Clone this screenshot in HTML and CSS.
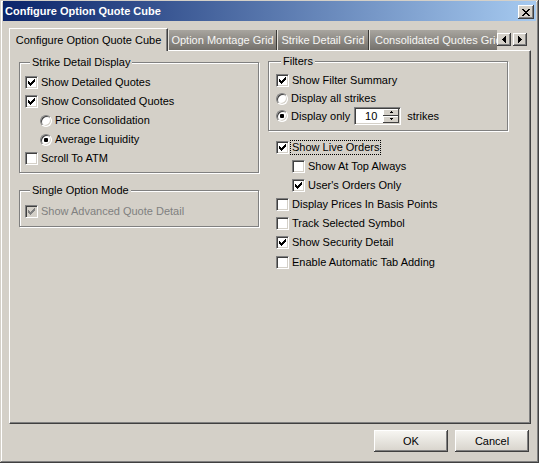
FILE: index.html
```html
<!DOCTYPE html>
<html>
<head>
<meta charset="utf-8">
<title>Configure Option Quote Cube</title>
<link rel="stylesheet" href="styles.css">
</head>
<body>
<div class="window">
  <div class="titlebar">
    <span class="title">Configure Option Quote Cube</span>
    <span class="close">
      <svg width="8" height="7" viewBox="0 0 8 7" shape-rendering="crispEdges"><path fill="#000" d="M0 0h2v1h-2zM6 0h2v1h-2zM1 1h2v1h-2zM5 1h2v1h-2zM2 2h4v1h-4zM3 3h2v1h-2zM2 4h4v1h-4zM1 5h2v1h-2zM5 5h2v1h-2zM0 6h2v1h-2zM6 6h2v1h-2z"/></svg>
    </span>
  </div>
  <div class="client">
    <div class="tabstrip">
      <div class="tablist">
        <div class="tab active">Configure Option Quote Cube</div>
        <div class="tab w1">Option Montage Grid</div>
        <div class="tab w2">Strike Detail Grid</div>
        <div class="tab w3">Consolidated Quotes Grid</div>
      </div>
      <div class="scrollers">
        <span class="sbtn"><svg width="4" height="7" viewBox="0 0 4 7" shape-rendering="crispEdges"><path fill="#000" d="M3 0h1v7h-1zM2 1h1v5h-1zM1 2h1v3h-1zM0 3h1v1h-1z"/></svg></span>
        <span class="sbtn"><svg width="4" height="7" viewBox="0 0 4 7" shape-rendering="crispEdges"><path fill="#000" d="M0 0h1v7h-1zM1 1h1v5h-1zM2 2h1v3h-1zM3 3h1v1h-1z"/></svg></span>
      </div>
    </div>
    <div class="panel">
      <div class="col col-left">
        <fieldset class="group g-strike">
          <legend>Strike Detail Display</legend>
          <div class="row"><span class="cb on"><svg class="chk" width="7" height="7" viewBox="0 0 7 7" shape-rendering="crispEdges"><path d="M0 2h1v1h1v1h1v-1h1v-1h1v-1h1v-1h1v3h-1v1h-1v1h-1v1h-1v1h-1v-1h-1v-1h-1z"/></svg></span>Show Detailed Quotes</div>
          <div class="row"><span class="cb on"><svg class="chk" width="7" height="7" viewBox="0 0 7 7" shape-rendering="crispEdges"><path d="M0 2h1v1h1v1h1v-1h1v-1h1v-1h1v-1h1v3h-1v1h-1v1h-1v1h-1v1h-1v-1h-1v-1h-1z"/></svg></span>Show Consolidated Quotes</div>
          <div class="row sub"><span class="rb"></span>Price Consolidation</div>
          <div class="row sub"><span class="rb on"></span>Average Liquidity</div>
          <div class="row"><span class="cb"></span>Scroll To ATM</div>
        </fieldset>
        <fieldset class="group g-single">
          <legend>Single Option Mode</legend>
          <div class="row disabled"><span class="cb on"><svg class="chk" width="7" height="7" viewBox="0 0 7 7" shape-rendering="crispEdges"><path d="M0 2h1v1h1v1h1v-1h1v-1h1v-1h1v-1h1v3h-1v1h-1v1h-1v1h-1v1h-1v-1h-1v-1h-1z"/></svg></span>Show Advanced Quote Detail</div>
        </fieldset>
      </div>
      <div class="col col-right">
        <fieldset class="group g-filters">
          <legend>Filters</legend>
          <div class="row r1"><span class="cb on"><svg class="chk" width="7" height="7" viewBox="0 0 7 7" shape-rendering="crispEdges"><path d="M0 2h1v1h1v1h1v-1h1v-1h1v-1h1v-1h1v3h-1v1h-1v1h-1v1h-1v1h-1v-1h-1v-1h-1z"/></svg></span>Show Filter Summary</div>
          <div class="row r2"><span class="rb"></span>Display all strikes</div>
          <div class="row r3"><span class="rb on"></span>Display only<span class="spin"><span class="spin-val">10</span><span class="spin-btns"><span class="sb"><svg width="5" height="3" viewBox="0 0 5 3" shape-rendering="crispEdges"><path fill="#000" d="M2 0h1v1h-1zM1 1h3v1h-3z"/></svg></span><span class="sb"><svg width="5" height="3" viewBox="0 0 5 3" shape-rendering="crispEdges"><path fill="#000" d="M1 0h3v1h-3zM2 1h1v1h-1z"/></svg></span></span></span><span class="after-spin">strikes</span></div>
        </fieldset>
        <div class="options">
          <div class="row"><span class="cb on tight"><svg class="chk" width="7" height="7" viewBox="0 0 7 7" shape-rendering="crispEdges"><path d="M0 2h1v1h1v1h1v-1h1v-1h1v-1h1v-1h1v3h-1v1h-1v1h-1v1h-1v1h-1v-1h-1v-1h-1z"/></svg></span><span class="focus">Show Live Orders</span></div>
          <div class="row sub"><span class="cb"></span>Show At Top Always</div>
          <div class="row sub"><span class="cb on"><svg class="chk" width="7" height="7" viewBox="0 0 7 7" shape-rendering="crispEdges"><path d="M0 2h1v1h1v1h1v-1h1v-1h1v-1h1v-1h1v3h-1v1h-1v1h-1v1h-1v1h-1v-1h-1v-1h-1z"/></svg></span>User's Orders Only</div>
          <div class="row"><span class="cb"></span>Display Prices In Basis Points</div>
          <div class="row"><span class="cb"></span>Track Selected Symbol</div>
          <div class="row"><span class="cb on"><svg class="chk" width="7" height="7" viewBox="0 0 7 7" shape-rendering="crispEdges"><path d="M0 2h1v1h1v1h1v-1h1v-1h1v-1h1v-1h1v3h-1v1h-1v1h-1v1h-1v1h-1v-1h-1v-1h-1z"/></svg></span>Show Security Detail</div>
          <div class="row last"><span class="cb"></span>Enable Automatic Tab Adding</div>
        </div>
      </div>
    </div>
    <div class="buttons">
      <span class="btn">OK</span>
      <span class="btn">Cancel</span>
    </div>
  </div>
</div>
</body>
</html>
```
FILE: styles.css
```css
* { box-sizing: border-box; }
html, body { margin: 0; padding: 0; }
body {
  width: 539px;
  height: 463px;
  overflow: hidden;
  background: #D4D0C8;
  font-family: "Liberation Sans", Arial, sans-serif;
  font-size: 11px;
  color: #000;
}
.window {
  width: 539px;
  height: 463px;
  padding: 1px 3px 0 3px;
  background: #D4D0C8;
  box-shadow: inset -1px -1px #404040, inset 1px 1px #D4D0C8, inset -2px -2px #808080, inset 2px 2px #fff;
  display: flex;
  flex-direction: column;
}
.titlebar {
  height: 20px;
  flex: none;
  display: flex;
  align-items: center;
  justify-content: space-between;
  padding: 0 2px 0 2px;
  background: linear-gradient(to right, #0A246A, #A6CAF0);
}
.title {
  color: #fff;
  font-weight: bold;
  font-size: 11px;
  line-height: 13px;
}
.close {
  width: 16px;
  height: 14px;
  margin-top: 2px;
  background: #D4D0C8;
  box-shadow: inset -1px -1px #404040, inset 1px 1px #fff, inset -2px -2px #808080;
  display: flex;
  align-items: center;
  justify-content: center;
  padding-right: 1px;
}
.close svg { display: block; }
.client {
  flex: 1;
  padding: 7px 5px 0 6px;
  display: flex;
  flex-direction: column;
}
.tabstrip {
  height: 22px;
  flex: none;
  display: flex;
  position: relative;
  z-index: 1;
}
.tablist {
  width: 488px;
  height: 23px;
  display: flex;
  align-items: flex-end;
  overflow: hidden;
  flex: none;
}
.tab {
  flex: none;
  height: 20px;
  margin-bottom: 1px;
  display: flex;
  align-items: center;
  justify-content: center;
  white-space: nowrap;
  color: #f6f6f4;
  background: linear-gradient(#a8a59f, #74716c);
  border-left: 1px solid #e4e2dc;
  border-right: 1px solid #3a3936;
}
.tab.active {
  width: 159px;
  height: 23px;
  margin-bottom: 0;
  color: #000;
  background: #D4D0C8;
  border-top: 1px solid #fff;
  border-left: 1px solid #fff;
  border-right: 1px solid #404040;
  box-shadow: inset -1px 0 #808080;
}
.tab.w1 { width: 109px; }
.tab.w2 { width: 92px; }
.tab.w3 { width: 150px; justify-content: flex-start; padding-left: 5px; }
.scrollers {
  display: flex;
  gap: 2px;
  margin-top: 5px;
}
.sbtn {
  width: 14px;
  height: 13px;
  background: #D4D0C8;
  box-shadow: inset -1px -1px #404040, inset 1px 1px #fff, inset -2px -2px #808080;
  display: flex;
  align-items: center;
  justify-content: center;
}
.sbtn svg { display: block; }
.panel {
  height: 374px;
  flex: none;
  background: #D4D0C8;
  border-top: 1px solid #fff;
  border-left: 1px solid #fff;
  border-right: 1px solid #404040;
  border-bottom: 1px solid #404040;
  box-shadow: inset -1px -1px #808080;
  display: flex;
  align-items: flex-start;
  gap: 9px;
  padding: 5px 0 0 9px;
}
.col { width: 240px; flex: none; display: flex; flex-direction: column; }
.col-right { margin-top: -1px; }
.group {
  margin: 0;
  min-width: 0;
  border: 1px solid #808080;
  box-shadow: inset 1px 1px #fff, 1px 1px #fff;
  padding: 4px 6px 4px 5px;
}
.group legend {
  padding: 0 2px;
  margin-left: 5px;
  line-height: 13px;
  background: #D4D0C8;
}
.g-single { margin-top: 11px; padding-top: 5px; padding-bottom: 5px; }
.g-filters { padding: 3px 6px 5px 7px; }
.row {
  height: 19px;
  display: flex;
  align-items: center;
  white-space: nowrap;
  line-height: 13px;
}
.row.sub { padding-left: 15px; }
.g-filters .r2 { height: 17px; }
.g-filters .r3 { height: 18px; }
.options { margin-top: 7px; padding-left: 8px; }
.options .row.sub { padding-left: 16px; }
.options .row.last { height: 21px; }
.cb {
  flex: none;
  width: 13px;
  height: 13px;
  margin-right: 3px;
  background: #fff;
  border: 1px solid;
  border-color: #808080 #fff #fff #808080;
  box-shadow: inset 1px 1px #404040, inset -1px -1px #D4D0C8;
  display: flex;
  align-items: center;
  justify-content: center;
}
.cb.tight { margin-right: 1px; }
.chk { display: block; fill: #000; }
.disabled { color: #808080; }
.disabled .cb { background: #D4D0C8; }
.disabled .chk { fill: #808080; }
.rb {
  flex: none;
  position: relative;
  width: 12px;
  height: 12px;
  margin-right: 3px;
  border-radius: 50%;
  background: #fff;
  border: 1px solid;
  border-color: #808080 #fff #fff #808080;
  box-shadow: inset 1px 1px #404040, inset -1px -1px #D4D0C8;
}
.rb.on::after {
  content: "";
  position: absolute;
  left: 3px;
  top: 3px;
  width: 4px;
  height: 4px;
  border-radius: 1px;
  background: #000;
}
.focus {
  border: 1px dotted #000;
  padding: 0 1px;
  line-height: 13px;
}
.spin {
  margin-left: 4px;
  width: 47px;
  height: 18px;
  display: flex;
  background: #fff;
  border: 1px solid;
  border-color: #808080 #fff #fff #808080;
  box-shadow: inset 1px 1px #404040, inset -1px -1px #D4D0C8;
  padding: 1px 1px 1px 1px;
}
.spin-val {
  flex: 1;
  text-align: right;
  padding-right: 6px;
  line-height: 14px;
}
.spin-btns {
  width: 16px;
  display: flex;
  flex-direction: column;
}
.sb {
  flex: 1;
  background: #D4D0C8;
  box-shadow: inset -1px -1px #404040, inset 1px 1px #fff;
  display: flex;
  align-items: center;
  justify-content: center;
}
.sb svg { display: block; }
.after-spin { margin-left: 6px; }
.buttons {
  display: flex;
  justify-content: flex-end;
  gap: 7px;
  padding-top: 6px;
  padding-right: 2px;
}
.btn {
  width: 74px;
  height: 22px;
  display: flex;
  align-items: center;
  justify-content: center;
  background: linear-gradient(#f8f7f3, #d6d2ca);
  box-shadow: inset -1px -1px #404040, inset 1px 1px #fff, inset -2px -2px #808080;
}
```
